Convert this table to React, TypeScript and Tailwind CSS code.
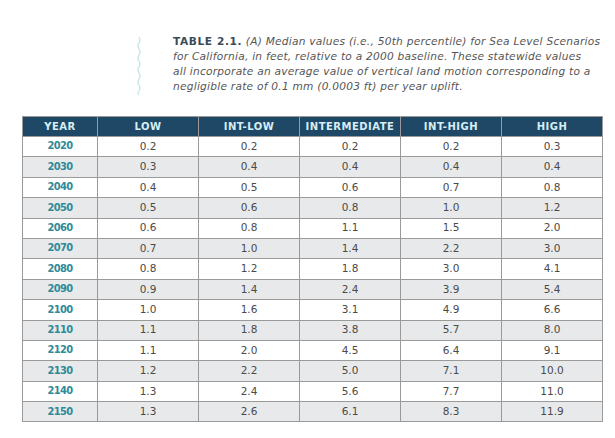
const rows: [string, string, string, string, string, string][] = [
  ['2020', '0.2', '0.2', '0.2', '0.2', '0.3'],
  ['2030', '0.3', '0.4', '0.4', '0.4', '0.4'],
  ['2040', '0.4', '0.5', '0.6', '0.7', '0.8'],
  ['2050', '0.5', '0.6', '0.8', '1.0', '1.2'],
  ['2060', '0.6', '0.8', '1.1', '1.5', '2.0'],
  ['2070', '0.7', '1.0', '1.4', '2.2', '3.0'],
  ['2080', '0.8', '1.2', '1.8', '3.0', '4.1'],
  ['2090', '0.9', '1.4', '2.4', '3.9', '5.4'],
  ['2100', '1.0', '1.6', '3.1', '4.9', '6.6'],
  ['2110', '1.1', '1.8', '3.8', '5.7', '8.0'],
  ['2120', '1.1', '2.0', '4.5', '6.4', '9.1'],
  ['2130', '1.2', '2.2', '5.0', '7.1', '10.0'],
  ['2140', '1.3', '2.4', '5.6', '7.7', '11.0'],
  ['2150', '1.3', '2.6', '6.1', '8.3', '11.9'],
];

const headers = ['YEAR', 'LOW', 'INT-LOW', 'INTERMEDIATE', 'INT-HIGH', 'HIGH'];

export default function App() {
  return (
    <div className="w-[615px] h-[438px] bg-white font-['DejaVu_Sans',sans-serif] text-[#4a4a4a]">
      <div className="flex pt-[34px] pl-[136px]">
        <svg width="6" height="58" viewBox="0 0 6 58" className="mt-[3px]">
          <path
            d="M3 0 q2 3 0 6 q-2 3 0 6 q2 3 0 6 q-2 3 0 6 q2 3 0 6 q-2 3 0 6 q2 3 0 6 q-2 3 0 6 q2 3 0 6 q-2 3 0 4"
            fill="none"
            stroke="#bfe3e6"
            strokeWidth="1.2"
          />
        </svg>
        <p className="ml-[31px] text-[10.6px] leading-[15px] tracking-[0.25px] italic text-[#555] whitespace-nowrap">
          <span className="not-italic font-bold tracking-[0.6px] text-[#3b4a57]">TABLE 2.1.</span> (A) Median values
          (i.e., 50th percentile) for Sea Level Scenarios
          <br />
          for California, in feet, relative to a 2000 baseline. These statewide values
          <br />
          all incorporate an average value of vertical land motion corresponding to a
          <br />
          negligible rate of 0.1 mm (0.0003 ft) per year uplift.
        </p>
      </div>
      <table className="ml-[22px] mt-[21px] border-collapse table-fixed w-[580px]">
        <colgroup>
          <col className="w-[75px]" />
          <col className="w-[101px]" />
          <col className="w-[101px]" />
          <col className="w-[101px]" />
          <col className="w-[101px]" />
          <col className="w-[101px]" />
        </colgroup>
        <thead>
          <tr className="h-[20px] bg-[#1f4867]">
            {headers.map((h) => (
              <th
                key={h}
                className="border border-[#9a9a9a] p-0 text-[10px] font-bold tracking-[0.5px] text-[#d6eef4] text-center"
              >
                {h}
              </th>
            ))}
          </tr>
        </thead>
        <tbody>
          {rows.map((r, i) => (
            <tr key={r[0]} className={`h-[20.4px] ${i % 2 === 1 ? 'bg-[#e8e9ea]' : 'bg-white'}`}>
              <td className="border border-[#9a9a9a] p-0 text-center font-['DejaVu_Sans_Condensed',sans-serif] font-bold text-[11px] text-[#2f8a99] tracking-[-0.6px]">
                {r[0]}
              </td>
              {r.slice(1).map((v, j) => (
                <td key={j} className="border border-[#9a9a9a] p-0 text-center text-[10.5px] text-[#4a4a4a]">
                  {v}
                </td>
              ))}
            </tr>
          ))}
        </tbody>
      </table>
    </div>
  );
}
